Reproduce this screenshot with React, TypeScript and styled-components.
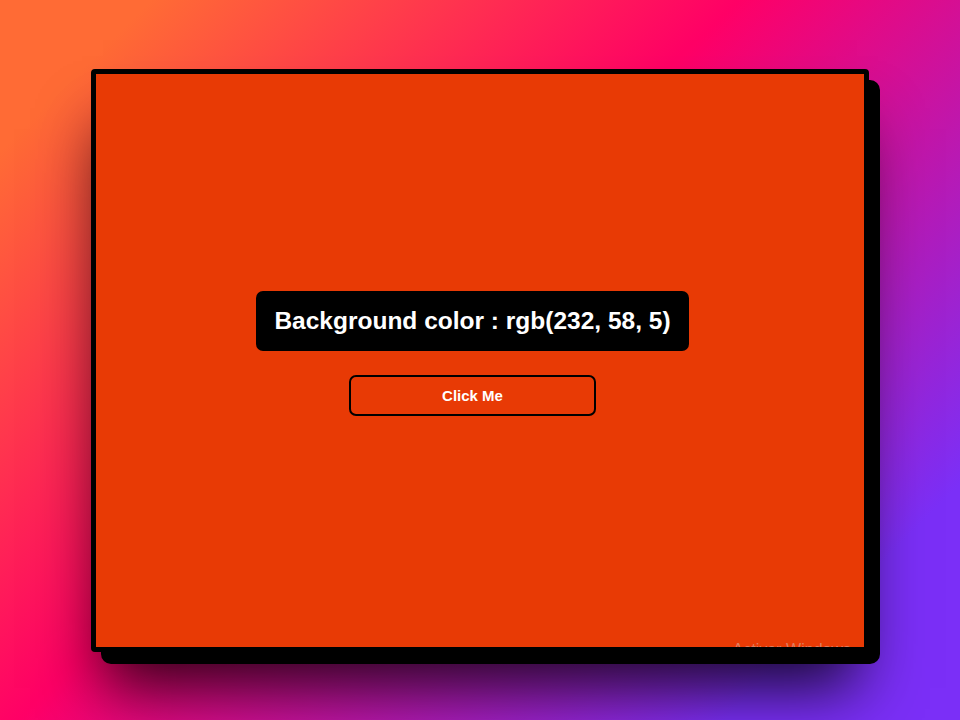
import React from "react";
import styled, { createGlobalStyle } from "styled-components";

const Global = createGlobalStyle`
  html, body {
    margin: 0;
    padding: 0;
    height: 100%;
  }
  body {
    font-family: "Liberation Sans", Arial, sans-serif;
  }
  #root {
    height: 100%;
  }
`;

const Page = styled.main`
  position: relative;
  z-index: 0;
  width: 100vw;
  height: 100vh;
  display: flex;
  align-items: center;
  justify-content: center;
  background: linear-gradient(135deg, #ff6b35 9%, #ff0066 44%, #7b2ff7 86%);
  overflow: hidden;
`;

const Card = styled.section<{ $bg: string }>`
  position: relative;
  box-sizing: content-box;
  width: 753px;
  height: 559px;
  padding: 0 15px 14px 0;
  border: 5px solid #000;
  border-radius: 4px;
  background: ${(p) => p.$bg};
  box-shadow: 0 48px 60px -12px rgba(0, 0, 0, 0.8);
  display: flex;
  flex-direction: column;
  align-items: center;
  justify-content: center;
  gap: 24px;

  &::before {
    content: "";
    position: absolute;
    z-index: -1;
    left: 5px;
    top: 6px;
    right: -16px;
    bottom: -17px;
    background: #000;
    border-radius: 10px;
  }
`;

const ColorLabel = styled.h1`
  margin: 0;
  padding: 16px 18px;
  border-radius: 7px;
  background: #000;
  color: #fff;
  font-family: "Liberation Sans", Arial, sans-serif;
  font-weight: 700;
  font-size: 24.5px;
  line-height: 28px;
  white-space: nowrap;
`;

const Button = styled.button`
  box-sizing: border-box;
  width: 247px;
  height: 41px;
  border: 2px solid #000;
  border-radius: 7px;
  background: transparent;
  color: #fff;
  font-family: "Liberation Sans", Arial, sans-serif;
  font-weight: 700;
  font-size: 15px;
  cursor: pointer;
`;

const Clip = styled.div`
  position: absolute;
  inset: 0;
  overflow: hidden;
  pointer-events: none;
`;

const Watermark = styled.span`
  position: absolute;
  right: 13px;
  bottom: -12px;
  font-family: "Liberation Sans", Arial, sans-serif;
  font-size: 16px;
  color: rgba(210, 210, 210, 0.45);
  white-space: nowrap;
`;

export default function App() {
  const rgb = [232, 58, 5];
  const bg = `rgb(${rgb[0]}, ${rgb[1]}, ${rgb[2]})`;
  return (
    <>
      <Global />
      <Page>
        <Card $bg={bg}>
          <ColorLabel>Background color : {bg}</ColorLabel>
          <Button>Click Me</Button>
          <Clip>
            <Watermark>Activar Windows</Watermark>
          </Clip>
        </Card>
      </Page>
    </>
  );
}
